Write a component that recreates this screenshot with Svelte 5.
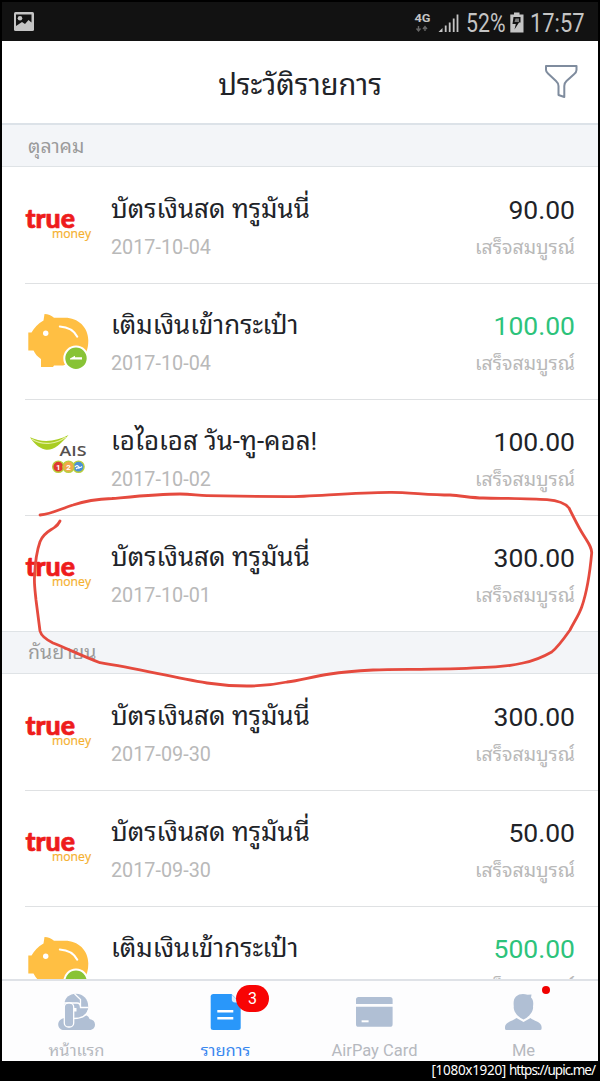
<script lang="ts">
type Kind = 'true' | 'wallet' | 'ais';
interface Item {
    kind: Kind;
    title: string;
    date: string;
    amount: string;
    income?: boolean;
}
const doneLabel = 'เสร็จสมบูรณ์';
const months: { name: string; items: Item[] }[] = [
    {
        name: 'ตุลาคม',
        items: [
            { kind: 'true', title: 'บัตรเงินสด ทรูมันนี่', date: '2017-10-04', amount: '90.00' },
            { kind: 'wallet', title: 'เติมเงินเข้ากระเป๋า', date: '2017-10-04', amount: '100.00', income: true },
            { kind: 'ais', title: 'เอไอเอส วัน-ทู-คอล!', date: '2017-10-02', amount: '100.00' },
            { kind: 'true', title: 'บัตรเงินสด ทรูมันนี่', date: '2017-10-01', amount: '300.00' }
        ]
    },
    {
        name: 'กันยายน',
        items: [
            { kind: 'true', title: 'บัตรเงินสด ทรูมันนี่', date: '2017-09-30', amount: '300.00' },
            { kind: 'true', title: 'บัตรเงินสด ทรูมันนี่', date: '2017-09-30', amount: '50.00' },
            { kind: 'wallet', title: 'เติมเงินเข้ากระเป๋า', date: '', amount: '500.00', income: true }
        ]
    }
];
const tabs = [
    { id: 'home', label: 'หน้าแรก' },
    { id: 'list', label: 'รายการ', badge: '3' },
    { id: 'card', label: 'AirPay Card' },
    { id: 'me', label: 'Me', dot: true }
];
let active = $state('list');
</script>

<div class="frame">
  <div class="screen">
    <div class="status-bar">
      <svg class="picture" width="20" height="19" viewBox="0 0 20 19">
        <rect width="20" height="19" rx="1.5" fill="#c4c4c4" />
        <path d="M2 2.5H17.5V10.5L14.5 8L11 12L8 10L2 14Z" fill="#121212" />
        <circle cx="6" cy="6.2" r="2.3" fill="#c4c4c4" />
      </svg>
      <svg class="indicators" width="178" height="36" viewBox="0 0 178 36" fill="#c4c4c4">
        <text x="4.500" y="20" font-size="11.500" font-weight="700" textLength="16" lengthAdjust="spacingAndGlyphs">4G</text>
        <path d="M8.500 24V27.500M6.500 26.500L8.500 29L10.500 26.500M15 29V26M13 27L15 24.500L17 27" fill="none" stroke="#666" stroke-width="1.400" />
        <path d="M28.500 30L32.500 26V30ZM34.800 23.500H36.600V30H34.800ZM38.800 20.500H40.600V30H38.800ZM42.800 16.500H44.600V30H42.800ZM46.600 12.500H48.400V30H46.600Z" />
        <text x="56" y="30" font-size="25.500" textLength="39.500" lengthAdjust="spacingAndGlyphs">52%</text>
        <path d="M104 10.500H109.500V12.500H113.500V30.500H100.300V12.500H104Z" />
        <path d="M103.500 15H110.500V20.500H109L104.500 27.500L105.800 22H102.500Z" fill="#121212" />
        <path d="M105.500 16.500H109V20H104.500Z" fill="#777" />
        <text x="120" y="30" font-size="25.500" textLength="54.500" lengthAdjust="spacingAndGlyphs">17:57</text>
      </svg>
    </div>

    <header>
      <h1>ประวัติรายการ</h1>
      <button class="filter" aria-label="filter">
        <svg width="36" height="36" viewBox="0 0 36 36">
          <path d="M2 2H32.500V6C32.500 8 31.500 9 30 10.200L22.500 17C20.500 18.800 20.300 20 20.300 22V33L14.500 31V22C14.500 20 14 18.800 12 17L4 9.500C2.500 8.200 2 7.500 2 6Z" fill="none" stroke="#7f8c9e" stroke-width="2" stroke-linejoin="round" />
        </svg>
      </button>
    </header>

    <main>
      {#each months as month}
        <h2>{month.name}</h2>
        {#each month.items as item}
          <div class="row">
            <svg class="logo" width="72" height="72" viewBox="0 0 72 72">
              {#if item.kind === 'true'}
                <text class="true-word" x="3.500" y="38.500" textLength="49.500" lengthAdjust="spacingAndGlyphs">true</text>
                <text class="money-word" x="30" y="49.300" textLength="39" lengthAdjust="spacingAndGlyphs">money</text>
              {:else if item.kind === 'wallet'}
                <path d="M22.500 9C26 9 29.500 10.500 32 12.700H43C56 12.700 66.300 22 66.300 35.500C66.300 44 64 50 59 54L41 60.500H32L31 62H19V54C15 51.500 13.500 49 11.500 45.500H6.300V27.500H9.500C12 23 16 18.500 21.500 15.500Z" fill="#ffbf43" />
                <circle cx="23.700" cy="28.300" r="2.700" fill="#fff" />
                <path d="M37.800 21.500C46 22 52 25.500 55.300 31.700" fill="none" stroke="#fff" stroke-width="2" stroke-linecap="round" />
                <circle cx="54" cy="53.300" r="11.700" fill="#88c336" stroke="#fff" stroke-width="2" />
                <path d="M48 53.500L53 50.800V52.300H60V54.500H48Z" fill="#fff" />
              {:else}
                <path d="M8 16.300C21 22.500 35 20 46.500 14C38 24 31 30 23 28.500C16 27 11 21 8 16.300Z" fill="#a9cd22" />
                <path d="M9.500 18C22 25.500 35 22.500 44 16" fill="none" stroke="#e3ef9f" stroke-width="1.200" />
                <text class="ais-word" x="37.500" y="34.700" textLength="27" lengthAdjust="spacingAndGlyphs">AIS</text>
                <g stroke="#b9cf3c" stroke-width="1.400">
                  <circle cx="36.300" cy="45.700" r="5.600" fill="#df392f" />
                  <circle cx="56.500" cy="45.700" r="5.600" fill="#4a90d6" />
                  <circle cx="46.500" cy="45.700" r="5.600" fill="#f0a94a" />
                </g>
                <text class="digit" x="36.300" y="48.800">1</text>
                <text class="digit" x="46.500" y="48.800">2</text>
                <path d="M53 46Q55 43.500 56.500 45.500T60 45.500M54 48Q56 46 57.500 47.500" fill="none" stroke="#fff" stroke-width="1.100" />
              {/if}
            </svg>
            <div class="info">
              <div class="title">{item.title}</div>
              <div class="sub">{item.date}</div>
            </div>
            <div class="value">
              <div class="amount" class:income={item.income}>{item.amount}</div>
              <div class="sub state">{doneLabel}</div>
            </div>
          </div>
        {/each}
      {/each}
    </main>

    <nav>
      {#each tabs as tab}
        <button class="tab" class:active={active === tab.id} onclick={() => (active = tab.id)}>
          <span class="tab-icon">
            <svg width="40" height="40" viewBox="0 0 40 40" fill="currentColor">
              {#if tab.id === 'home'}
                <path d="M9 27C4.500 27.500 2.200 30.500 2.200 33.500C2.200 37 5 39 8 39H33.500C37 39 39 36.500 39 33.500C39 30.500 37 28.500 33.500 28C33 26 32 25.200 30.500 24.500L12 25Z" />
                <path d="M8.500 13C8.500 7 13.500 2.800 20 2.800C27.500 2.800 32.200 8.500 32.200 15.500C32.200 23 27 27.500 19 27.500L12 20Z" />
                <path d="M17.700 27.500C25 27.500 30.500 25.500 32.500 19M18.500 2.800L24.500 8.500V17M8 12H21C23 12 24.500 13.500 24.500 16.500H32.500" fill="none" stroke="#fff" stroke-width="1.300" />
                <path d="M17.700 17H20.500V20.500H17.700Z" fill="#fff" />
                <rect x="8.300" y="12" width="9.400" height="24" rx="4" stroke="#fff" stroke-width="1.300" />
              {:else if tab.id === 'list'}
                <path d="M8.500 3H26.500L35.700 12V36.500Q35.700 39 33.200 39H8.200Q5.700 39 5.700 36.500V5.500Q5.700 3 8.500 3Z" />
                <path d="M26.800 3.800V8.500Q27 11.500 30 11.500H35Z" fill="#dbeeff" />
                <path d="M12.300 20.300H28.300M12.300 27.300H28.300" stroke="#fff" stroke-width="2.400" />
              {:else if tab.id === 'card'}
                <path d="M4.500 6H36Q38.600 6 38.600 8.500V13H2V8.500Q2 6 4.500 6ZM2 15.700H38.600V33.200Q38.600 35.800 36 35.800H4.500Q2 35.800 2 33.200Z" />
                <path d="M7.600 30.300H14.600" stroke="#fff" stroke-width="2" />
              {:else}
                <path d="M13 5.500C16 2.500 21 2.300 24.500 3.800L28.500 3.500L28 6.500C30.500 9 30.500 12 30 15.500C30.800 20 26.500 26 20.500 28.500C14.500 26 10 20 10.800 15.500C10.300 11.500 10.500 8 13 5.500Z" />
                <path d="M13.500 27L20.500 31L27.500 27C30 29.500 38.600 31 38.600 36V37.500Q38.600 39 37 39H3.500Q2 39 2 37.500V36C2 31 11 29.500 13.500 27Z" />
              {/if}
            </svg>
            {#if tab.badge}<span class="badge">{tab.badge}</span>{/if}
            {#if tab.dot}<span class="dot"></span>{/if}
          </span>
          <span class="tab-label">{tab.label}</span>
        </button>
      {/each}
    </nav>
  </div>
  <footer>[1080x1920]<span>https://upic.me/</span></footer>

  <!-- hand-drawn marker around the 2017-10-01 entry -->
  <svg class="marker" width="600" height="1081" viewBox="0 0 600 1081">
    <path d="M40 515C52 514 60 509 73 505C88 500 100 499 112 498.500C140 496 160 494 180 494C192 494 198 495.700 207 495.700L287 496.700C315 496.500 350 492.500 390 492.300C405 492 430 495 450 495C463 496 473 498 483 498C510 498.500 530 498.500 547 499.700C557 500.500 565 503 569 508C574 518 577 524 581 531C588 543 592 547 591.700 553C590 572 588 589 581.700 607C579 615 574 622 570 630C563 640 558 647 551.700 652C543 657 533 661 523 663C510 666 495 667.500 480 667.700C440 670 400 669 373 670C355 671 343 672 330 674C310 677 300 681 287 682C273 685 260 686 247 686C233 686 220 685 207 683C170 677 140 669 100 662.700C82 656 66 648 53 643C45 639 41 635 40 631L36 600C35 590 34 583 34.500 577C35 564 36 553 40 541.700C44 532 50 531 55 527C58 525 59 523 60 521" />
  </svg>
</div>

<style>
  :global(body) {
    background: #000;
  }

  .frame {
    position: relative;
    width: 600px;
    height: 1081px;
    box-sizing: border-box;
    padding: 2px 2px 0;
    overflow: hidden;
    background: #000;
    color: #212328;
    font-family: Roboto, 'Noto Sans Thai Looped', 'Noto Sans', sans-serif;
  }

  .screen {
    height: 1059px;
    display: flex;
    flex-direction: column;
    background: #fff;
  }

  .status-bar {
    flex: none;
    height: 39px;
    box-sizing: border-box;
    padding: 0 10px 0 12px;
    display: flex;
    align-items: center;
    justify-content: space-between;
    background: #121212;
  }

  .indicators {
    height: 36px;
    margin-bottom: 3px;
  }

  header {
    flex: none;
    height: 84px;
    box-sizing: border-box;
    padding: 0 18px 0 54px;
    display: flex;
    align-items: center;
    border-bottom: 2px solid #dce2e8;
  }

  h1 {
    flex: 1;
    margin: 5px 0 0;
    text-align: center;
    font-size: 29px;
    line-height: 40px;
    font-weight: 400;
  }

  button {
    padding: 0;
    border: none;
    background: none;
    font: inherit;
    cursor: pointer;
  }

  .filter {
    width: 36px;
    height: 36px;
  }

  .filter svg {
    display: block;
  }

  main {
    flex: 1;
    min-height: 0;
    overflow: hidden;
  }

  h2 {
    height: 42px;
    box-sizing: border-box;
    margin: 0;
    padding: 2px 26px 0;
    border-bottom: 1px solid #dfe3e6;
    background: #f3f5f8;
    color: #9b9b9b;
    font-size: 19.500px;
    line-height: 40px;
    font-weight: 400;
  }

  .row + h2 {
    height: 43px;
    padding-top: 1px;
    border-top: 1px solid #dfe3e6;
  }

  .row {
    height: 116px;
    box-sizing: border-box;
    padding: 0 23px 0 20px;
    display: flex;
    position: relative;
  }

  .row:has(+ .row)::after {
    content: '';
    position: absolute;
    left: 23px;
    right: 0;
    bottom: -1px;
    height: 1px;
    background: #dfe1e3;
  }

  .logo {
    flex: none;
    margin: 22px 17px 0 0;
  }

  .true-word {
    font: 900 27px Lato, sans-serif;
    fill: #ee1c1c;
    stroke: #ee1c1c;
    stroke-width: 0.700;
    stroke-linejoin: round;
  }

  .money-word {
    font: 400 13px 'Open Sans', sans-serif;
    fill: #f5b02e;
    stroke: #f5b02e;
    stroke-width: 0.200;
  }

  .ais-word {
    font: 600 14px 'Open Sans', sans-serif;
    fill: #55504d;
  }

  .digit {
    font: 700 8px Roboto, sans-serif;
    fill: #fff;
    text-anchor: middle;
  }

  .info {
    flex: 1;
    padding-top: 25px;
    white-space: nowrap;
  }

  .value {
    padding-top: 25px;
    text-align: right;
    white-space: nowrap;
  }

  .title,
  .amount {
    height: 36px;
    line-height: 35px;
    font-size: 26.500px;
  }

  .title {
    font-size: 25.900px;
  }

  .income {
    color: #2dc37b;
  }

  .sub {
    margin-top: 8px;
    line-height: 24px;
    font-size: 19.800px;
    color: #b9b9b9;
  }

  .state {
    font-size: 19.500px;
  }

  nav {
    flex: none;
    height: 82px;
    box-sizing: border-box;
    display: flex;
    border-top: 2px solid #dfe2e7;
    background: #fdfdfe;
  }

  .tab {
    flex: 1;
    padding-top: 10px;
    display: flex;
    flex-direction: column;
    align-items: center;
    color: #b0bfd4;
  }

  .tab-icon {
    position: relative;
    height: 40px;
    margin-left: -1px;
  }

  .tab-label {
    margin-top: 9px;
    line-height: 22px;
    font-size: 16.500px;
    color: #b6b9bf;
  }

  .tab.active {
    color: #2997fa;
  }

  .active .tab-label {
    color: #3987ef;
  }

  .badge {
    position: absolute;
    left: 31px;
    top: -6px;
    width: 33px;
    height: 27px;
    border-radius: 14px;
    background: #f80404;
    color: #fff;
    font-size: 16px;
    line-height: 27px;
    text-align: center;
  }

  .dot {
    position: absolute;
    left: 39px;
    top: -5px;
    width: 8px;
    height: 8px;
    border-radius: 50%;
    background: #f00000;
  }

  footer {
    height: 20px;
    padding-right: 3px;
    color: #fff;
    font-family: 'Noto Sans', sans-serif;
    font-size: 13.500px;
    line-height: 18px;
    letter-spacing: -0.300px;
    text-align: right;
  }

  footer span {
    margin-left: 3px;
    letter-spacing: -1px;
  }

  .marker {
    position: absolute;
    left: 0;
    top: 0;
    fill: none;
    stroke: #e54a3e;
    stroke-width: 2.800;
    stroke-linecap: round;
    stroke-linejoin: round;
    pointer-events: none;
  }
</style>
